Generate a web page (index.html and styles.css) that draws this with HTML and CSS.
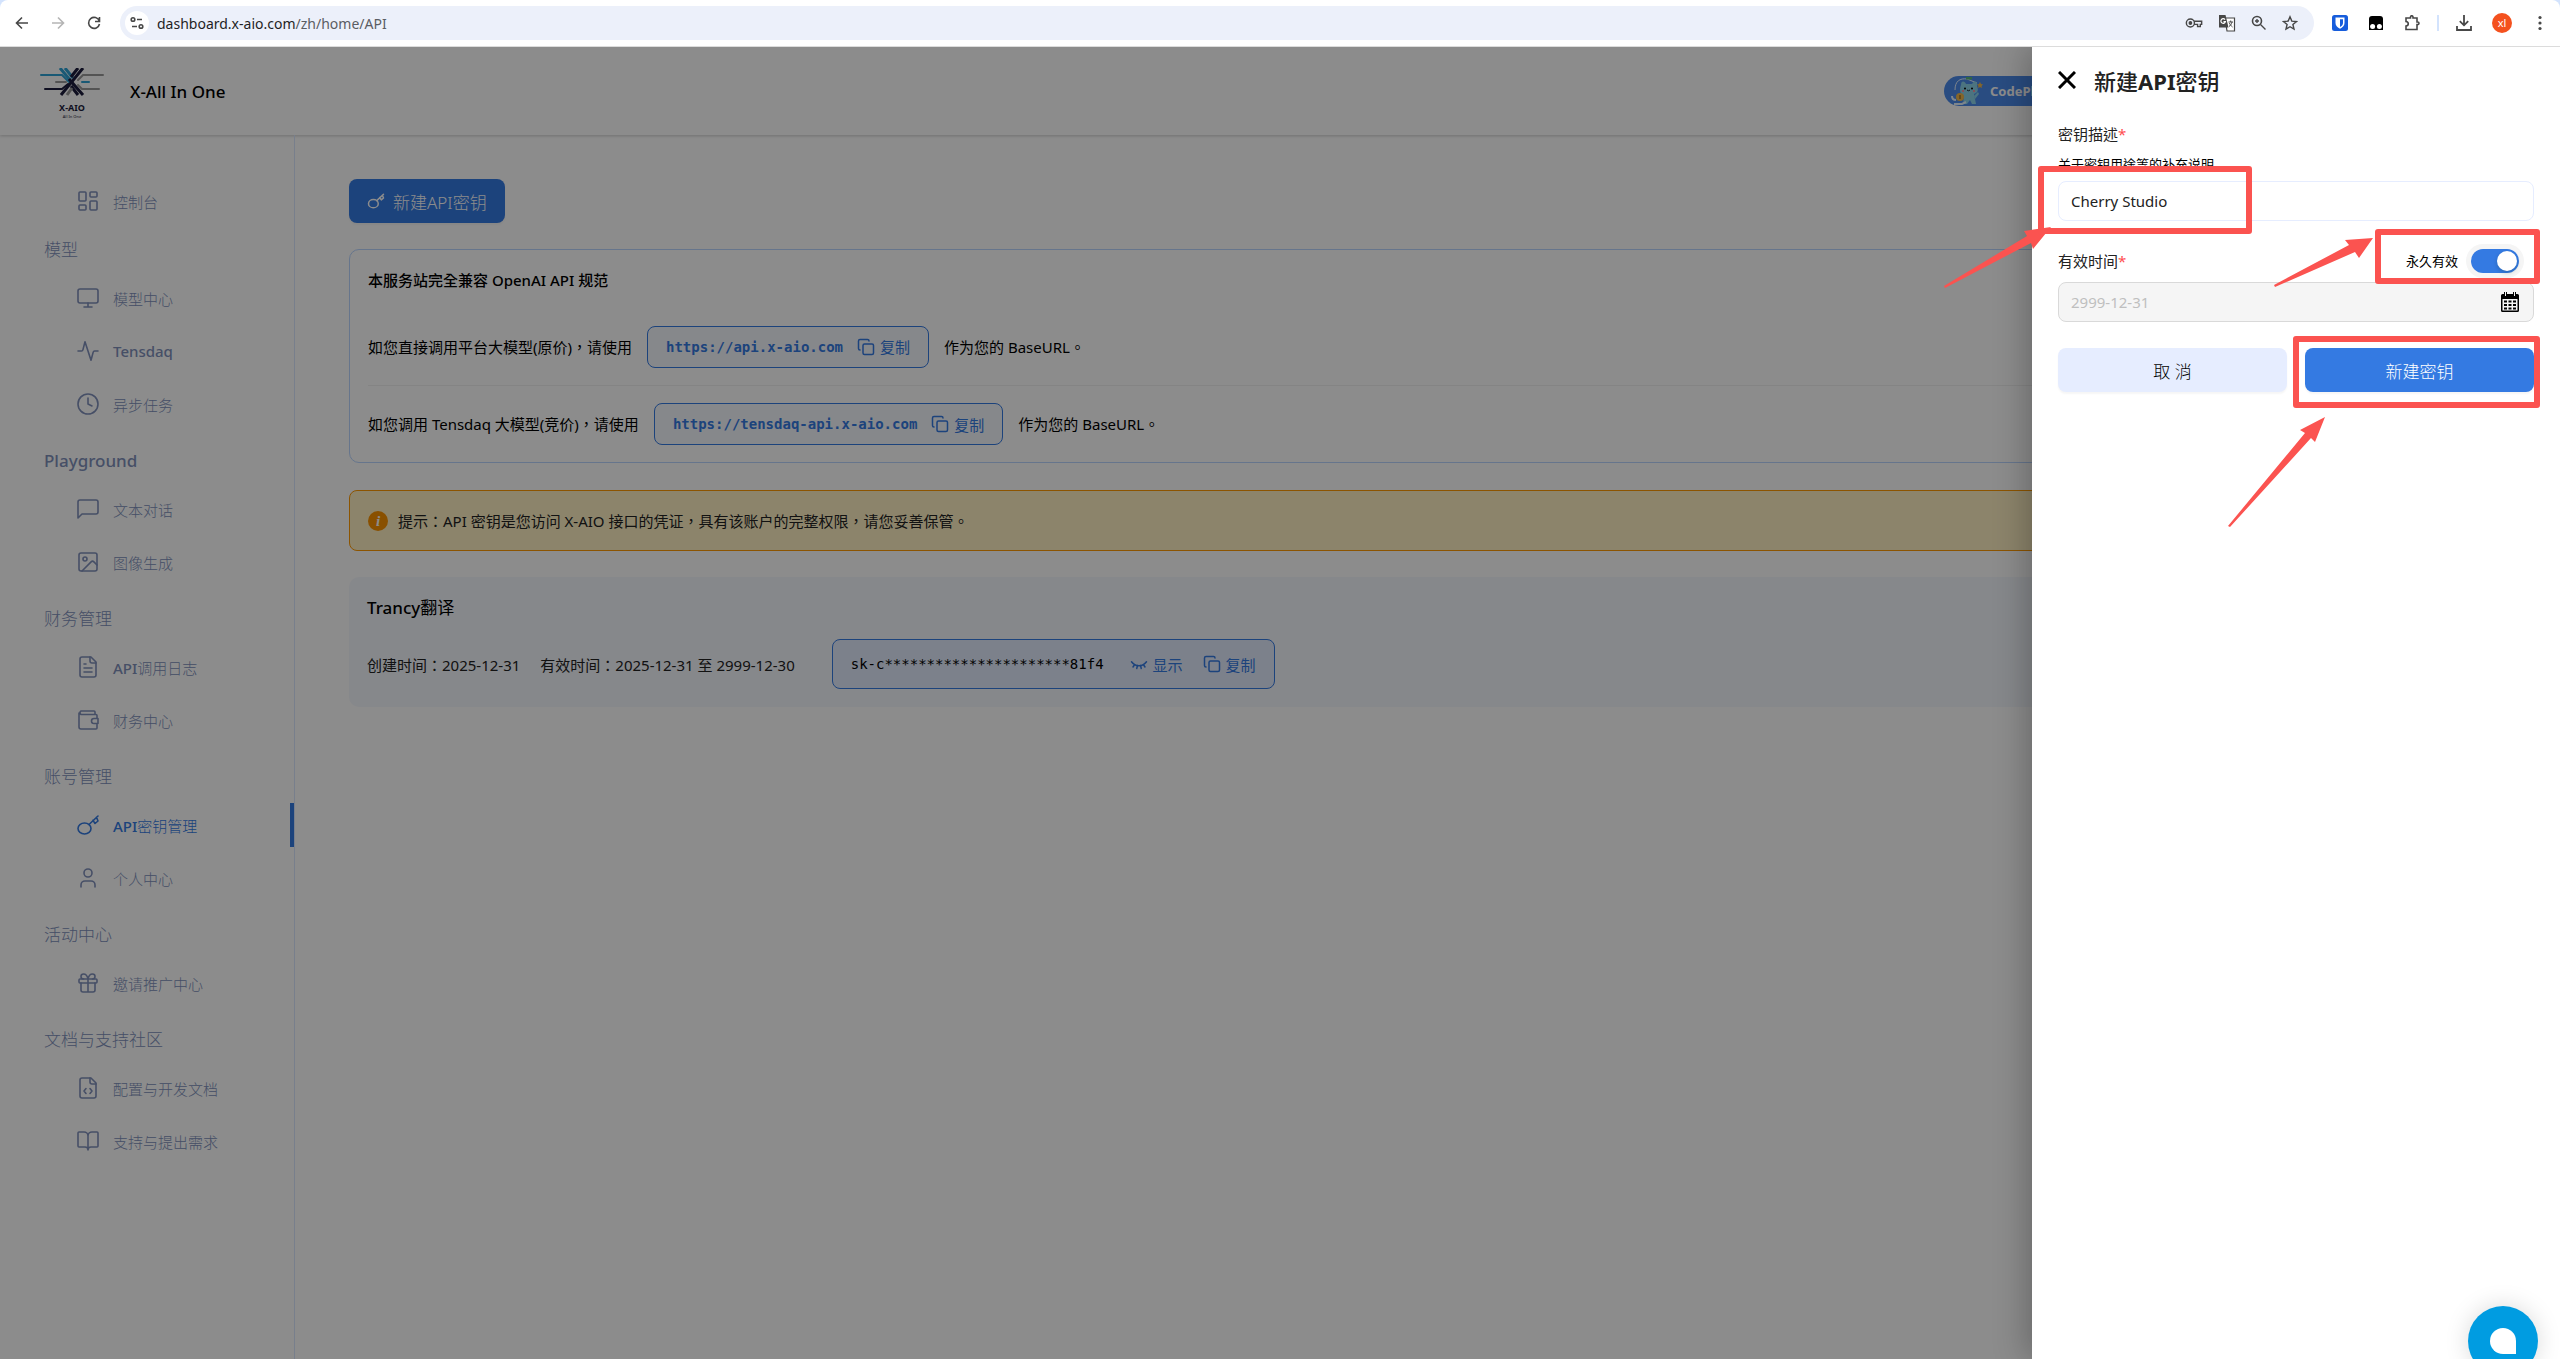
FILE: index.html
```html
<!DOCTYPE html>
<html lang="zh-TW">
<head>
    <meta charset="UTF-8">
    <meta name="viewport" content="width=device-width, initial-scale=1.0">
    <title>X-All In One</title>
    <link rel="stylesheet" href="styles.css">
</head>
<body>
    <!-- 图标 -->
    <svg class="sprite" aria-hidden="true">
        <symbol id="i-dashboard" viewBox="0 0 24 24"><rect x="3" y="3" width="7" height="9" rx="1"/><rect x="14" y="3" width="7" height="5" rx="1"/><rect x="14" y="12" width="7" height="9" rx="1"/><rect x="3" y="16" width="7" height="5" rx="1"/></symbol>
        <symbol id="i-monitor" viewBox="0 0 24 24"><rect x="2" y="3" width="20" height="14" rx="2"/><path d="M8 21h8M12 17v4"/></symbol>
        <symbol id="i-activity" viewBox="0 0 24 24"><path d="M2 12h3.500a1.500 1.500 0 0 0 1.400-1.100L9 2.700l6 18.600 2.200-8.200A1.500 1.500 0 0 1 18.600 12H22"/></symbol>
        <symbol id="i-clock" viewBox="0 0 24 24"><circle cx="12" cy="12" r="10"/><path d="M12 6v6l4 2"/></symbol>
        <symbol id="i-message" viewBox="0 0 24 24"><path d="M22 15a2 2 0 0 1-2 2H6l-4 4V5a2 2 0 0 1 2-2h16a2 2 0 0 1 2 2z"/></symbol>
        <symbol id="i-image" viewBox="0 0 24 24"><rect x="3" y="3" width="18" height="18" rx="2"/><circle cx="9" cy="9" r="2"/><path d="m21 15-3.100-3.100a2 2 0 0 0-2.800 0L6 21"/></symbol>
        <symbol id="i-file" viewBox="0 0 24 24"><path d="M15 2H6a2 2 0 0 0-2 2v16a2 2 0 0 0 2 2h12a2 2 0 0 0 2-2V7z"/><path d="M14 2v4a2 2 0 0 0 2 2h4M10 9H8M16 13H8M16 17H8"/></symbol>
        <symbol id="i-wallet" viewBox="0 0 24 24"><path d="M19 6V4a1 1 0 0 0-1-1H5a2 2 0 0 0 0 3.500h15a1 1 0 0 1 1 1V10M3 5v14a2 2 0 0 0 2 2h15a1 1 0 0 0 1-1v-3.500"/><path d="M22 10.500h-4a2.500 2.500 0 0 0 0 5h4z"/></symbol>
        <symbol id="i-key" viewBox="0 0 24 24"><ellipse cx="8.500" cy="15.500" rx="6.500" ry="5.500"/><path d="M13 11.500 22 3M20.500 4.300l1.500 3.700-3 2.500-2-3.200"/></symbol>
        <symbol id="i-user" viewBox="0 0 24 24"><circle cx="12" cy="7" r="4"/><path d="M19 21v-2a4 4 0 0 0-4-4H9a4 4 0 0 0-4 4v2"/></symbol>
        <symbol id="i-gift" viewBox="0 0 24 24"><rect x="3" y="8" width="18" height="4" rx="1"/><path d="M12 8v13M19 12v7a2 2 0 0 1-2 2H7a2 2 0 0 1-2-2v-7M7.500 8a2.500 2.500 0 0 1 0-5C11 3 12 8 12 8s1-5 4.500-5a2.500 2.500 0 0 1 0 5"/></symbol>
        <symbol id="i-code" viewBox="0 0 24 24"><path d="M15 2H6a2 2 0 0 0-2 2v16a2 2 0 0 0 2 2h12a2 2 0 0 0 2-2V7z"/><path d="M14 2v4a2 2 0 0 0 2 2h4M10 12.500 8 15l2 2.500M14 12.500l2 2.500-2 2.500"/></symbol>
        <symbol id="i-book" viewBox="0 0 24 24"><path d="M12 7v14M3 18a1 1 0 0 1-1-1V4a1 1 0 0 1 1-1h5a4 4 0 0 1 4 4 4 4 0 0 1 4-4h5a1 1 0 0 1 1 1v13a1 1 0 0 1-1 1h-6a3 3 0 0 0-3 3 3 3 0 0 0-3-3z"/></symbol>
        <symbol id="i-copy" viewBox="0 0 24 24"><rect x="8" y="8" width="14" height="14" rx="2"/><path d="M4 16a2 2 0 0 1-2-2V4a2 2 0 0 1 2-2h10a2 2 0 0 1 2 2"/></symbol>
        <symbol id="i-eye" viewBox="0 0 24 24"><path d="M2 9c5 7 15 7 20 0M4 16l2-3M20 16l-2-3M9 18l1-4M15 18l-1-4"/></symbol>
    </svg>

    <div class="browser">
        <div class="toolbar">
            <div class="nav-buttons">
                <button class="tool" aria-label="后退"><svg class="tool-icon" viewBox="0 0 16 16"><path d="M14 8H3M8 2.500 2.500 8 8 13.500"/></svg></button>
                <button class="tool off" aria-label="前进"><svg class="tool-icon" viewBox="0 0 16 16"><path d="M2 8h11M8 2.500 13.500 8 8 13.500"/></svg></button>
                <button class="tool" aria-label="刷新"><svg class="tool-icon" viewBox="0 0 16 16"><path d="M13.300 6A5.500 5.500 0 1 0 13.500 9M13.500 2v4.500H9"/></svg></button>
            </div>
            <div class="address">
                <span class="site-info"><svg class="tool-icon" viewBox="0 0 16 16"><circle cx="4" cy="4.500" r="1.800"/><path d="M8 4.500h5M3 11.500h5"/><circle cx="12" cy="11.500" r="1.800"/></svg></span>
                <span class="url">dashboard.x-aio.com<span class="path">/zh/home/API</span></span>
                <span class="address-icons">
                    <svg class="tool-icon wide" viewBox="0 0 20 16"><circle cx="6" cy="8" r="4.500"/><circle cx="6" cy="8" r="1.300" fill="#474747"/><path d="M10 6h8.500v3.500H17V12h-3V9.500h-4"/></svg>
                    <svg class="tool-icon wide" viewBox="0 0 18 18"><path d="M7 4h9.500v13H9z" fill="#fff" stroke-width="1.200"/><path d="M1 1h6.500l3 12.500H1z" fill="#474747" stroke="none"/><path d="M7 5.600a2.300 2.300 0 1 0 .4 2H5.500" stroke="#fff" stroke-width="1.200"/><path d="M10.500 8H15M12.700 6.500V8M14 8c-.4 2-1.500 3.500-3 4.500M11.500 9c.5 1.500 1.500 3 3 4" stroke-width="1"/></svg>
                    <svg class="tool-icon" viewBox="0 0 16 16"><circle cx="6" cy="6" r="4.500"/><path d="m9.500 9.500 5 5M6 4v4M4 6h4" stroke-width="1.400"/></svg>
                    <svg class="tool-icon" viewBox="0 0 16 16"><path d="m8 1.800 1.800 4.300 4.700.4-3.600 3 1.100 4.600L8 11.700 4 14.100l1.100-4.600-3.600-3 4.700-.4z" stroke-width="1.400"/></svg>
                </span>
            </div>
            <div class="extensions">
                <svg class="tool-icon" viewBox="0 0 16 16"><rect width="16" height="16" rx="2.500" fill="#175ddc" stroke="none"/><path d="M3.500 2.500h9V8c0 3-2.200 4.700-4.500 5.800C5.700 12.700 3.500 11 3.500 8z" fill="#fff" stroke="none"/><path d="M8 4.200h3V8c0 2-1.400 3.200-3 4z" fill="#175ddc" stroke="none"/></svg>
                <svg class="tool-icon" viewBox="0 0 16 16"><path d="M4 1h8c2 0 3 1 3 3v11H1V4c0-2 1-3 3-3z" fill="#000" stroke="none"/><circle cx="4.600" cy="11.500" r="2.500" fill="#fff" stroke="none"/><circle cx="11.400" cy="11.500" r="2.500" fill="#fff" stroke="none"/></svg>
                <svg class="tool-icon" viewBox="0 0 16 16"><path d="M2 3h4.500V2a1.200 1.200 0 0 1 2.500 0v1H13v4h.7a1.300 1.300 0 0 1 0 2.600H13V14.500H2V11c3-.3 3-4.200 0-4.500z"/></svg>
                <span class="divider"></span>
                <svg class="tool-icon" viewBox="0 0 16 16"><path d="M8 0v10M3.800 6.200 8 10.300l4.200-4.100M1 11v4h14v-4" stroke-width="1.800"/></svg>
                <span class="avatar">xl</span>
                <svg class="tool-icon" viewBox="0 0 16 16"><g fill="#474747" stroke="none"><circle cx="8" cy="2.500" r="1.600"/><circle cx="8" cy="8" r="1.600"/><circle cx="8" cy="13.500" r="1.600"/></g></svg>
            </div>
        </div>
    </div>

    <div class="viewport">
        <header class="header">
            <svg class="logo" viewBox="0 0 64 50" role="img" aria-label="X-AIO">
                <g fill="none" stroke-width="2">
                    <path d="M1 7h21l7 7M42 14h7" stroke="#2ea3d5" stroke-linecap="round"/>
                    <path d="M63 7H43l-5 5M16 14h10M59 21H42l-4-4" stroke="#9a9a9a" stroke-linecap="round"/>
                    <path d="M5 21h17l6-5" stroke="#1c1c3c" stroke-linecap="round"/>
                    <path d="m20 0 10 12M25 0l8 10" stroke="#2ea3d5" stroke-width="3"/>
                    <path d="M43 0 21 27M38 0l-7 9" stroke="#1c1c3c" stroke-width="3"/>
                    <path d="m29 11 14 16M31 18l7 9" stroke="#1c1c3c" stroke-width="3"/>
                    <path d="m32 20-5 7" stroke="#9a9a9a" stroke-width="3"/>
                </g>
                <text x="32" y="43" text-anchor="middle" class="logo-name">X-AIO</text>
                <text x="32" y="50" text-anchor="middle" class="logo-sub">All In One</text>
            </svg>
            <span class="brand">X-All In One</span>
            <a class="plan" href="#">
                <svg class="mascot" viewBox="0 0 34 30" aria-hidden="true">
                    <path d="M5 14C5 5 10 2 17 3l10 4" fill="none" stroke="#e4f2ff"/>
                    <path d="M16 1h6v2.500h-6z" fill="#5cb87a"/>
                    <path d="M11 9c0-5 4-4 5-1h6c2-4 6-3 5 2 2 5 0 7-3 8l1 5 1 5h-4l-2-4-3 4h-4l1-8c-4-2-5-6-3-11z" fill="#8ad3ea"/>
                    <path d="m24 20 4-4 1 2-4 5z" fill="#8ad3ea"/>
                    <circle cx="15" cy="12.500" r="1"/><circle cx="22" cy="12.500" r="1"/>
                    <path d="M12 15h2M23 15h2" stroke="#f08fa3" stroke-width="2"/>
                    <path d="M17 14q1.500 1.500 3 0" fill="none" stroke="#222"/>
                    <circle cx="10" cy="21" r="4" fill="#f0b84b"/><path d="M9 19h2v4H9z" fill="#b98531"/>
                    <path d="M2 20c0 3 2 4 4 4M4 28h8l4-2" stroke="#e4f2ff" fill="none" stroke-width="2"/>
                    <path d="m30 6 1 2 2 .5-1.500 1.500.5 2-2-1-2 1 .5-2L27 8.500l2-.5z" fill="#f0b84b"/>
                </svg>
                CodePlan
            </a>
        </header>

        <div class="layout">
            <nav class="sidebar">
                <a class="item" href="#"><svg class="icon"><use href="#i-dashboard"/></svg>控制台</a>
                <h2 class="group first">模型</h2>
                <a class="item" href="#"><svg class="icon"><use href="#i-monitor"/></svg>模型中心</a>
                <a class="item" href="#"><svg class="icon"><use href="#i-activity"/></svg><b>Tensdaq</b></a>
                <a class="item" href="#"><svg class="icon"><use href="#i-clock"/></svg>异步任务</a>
                <h2 class="group"><b>Playground</b></h2>
                <a class="item" href="#"><svg class="icon"><use href="#i-message"/></svg>文本对话</a>
                <a class="item" href="#"><svg class="icon"><use href="#i-image"/></svg>图像生成</a>
                <h2 class="group">财务管理</h2>
                <a class="item" href="#"><svg class="icon"><use href="#i-file"/></svg><span><b>API</b>调用日志</span></a>
                <a class="item" href="#"><svg class="icon"><use href="#i-wallet"/></svg>财务中心</a>
                <h2 class="group">账号管理</h2>
                <a class="item active" href="#"><svg class="icon"><use href="#i-key"/></svg><span><b>API</b>密钥管理</span></a>
                <a class="item" href="#"><svg class="icon"><use href="#i-user"/></svg>个人中心</a>
                <h2 class="group">活动中心</h2>
                <a class="item" href="#"><svg class="icon"><use href="#i-gift"/></svg>邀请推广中心</a>
                <h2 class="group">文档与支持社区</h2>
                <a class="item" href="#"><svg class="icon"><use href="#i-code"/></svg>配置与开发文档</a>
                <a class="item" href="#"><svg class="icon"><use href="#i-book"/></svg>支持与提出需求</a>
            </nav>

            <main class="content">
                <button class="btn primary new-key"><svg class="icon-sm"><use href="#i-key"/></svg>新建API密钥</button>

                <section class="card">
                    <h3 class="card-title">本服务站完全兼容 OpenAI API 规范</h3>
                    <div class="line">
                        <span>如您直接调用平台大模型(原价)，请使用</span>
                        <span class="pill"><code>https://api.x-aio.com</code><button class="link"><svg class="icon-copy"><use href="#i-copy"/></svg>复制</button></span>
                        <span>作为您的 BaseURL。</span>
                    </div>
                    <div class="line">
                        <span>如您调用 Tensdaq 大模型(竞价)，请使用</span>
                        <span class="pill"><code>https://tensdaq-api.x-aio.com</code><button class="link"><svg class="icon-copy"><use href="#i-copy"/></svg>复制</button></span>
                        <span>作为您的 BaseURL。</span>
                    </div>
                </section>

                <div class="notice">
                    <span class="info">i</span>
                    提示：API 密钥是您访问 X-AIO 接口的凭证，具有该账户的完整权限，请您妥善保管。
                </div>

                <section class="key">
                    <h3 class="key-name">Trancy<span>翻译</span></h3>
                    <div class="key-row">
                        <span>创建时间：2025-12-31</span>
                        <span>有效时间：2025-12-31 至 2999-12-30</span>
                        <span class="pill secret">
                            <code>sk-c**********************81f4</code>
                            <button class="link"><svg class="icon-copy"><use href="#i-eye"/></svg>显示</button>
                            <button class="link"><svg class="icon-copy"><use href="#i-copy"/></svg>复制</button>
                        </span>
                    </div>
                </section>
            </main>
        </div>

        <div class="mask"></div>

        <aside class="drawer">
            <div class="drawer-head">
                <button class="close" aria-label="关闭"><svg class="close-icon" viewBox="0 0 18 18"><path d="m1 1 16 16M17 1 1 17"/></svg></button>
                <h2 class="drawer-title">新建<b>API</b>密钥</h2>
            </div>
            <form class="form">
                <label class="label" for="desc">密钥描述<i>*</i></label>
                <p class="hint">关于密钥用途等的补充说明</p>
                <input class="input" type="text" id="desc" value="Cherry Studio">
                <div class="label-row">
                    <label class="label" for="expire">有效时间<i>*</i></label>
                    <label class="switch-label" for="forever">永久有效</label>
                    <input class="switch" type="checkbox" id="forever" checked>
                </div>
                <div class="date">
                    <input class="input" type="text" id="expire" value="2999-12-31" disabled>
                    <svg class="calendar" viewBox="0 0 18 20" aria-hidden="true"><path d="M1.500 2H3V0h3v2h6V0h3v2h1.500A1.500 1.500 0 0 1 18 3.500v15a1.500 1.500 0 0 1-1.500 1.500h-15A1.500 1.500 0 0 1 0 18.500v-15A1.500 1.500 0 0 1 1.500 2z"/><path d="M1.500 7h15v11.500h-15z" fill="#f5f5f5"/><path d="M3 8.500h3v2H3zm4.500 0h3v2h-3zm4.500 0h3v2h-3zM3 12h3v2H3zm4.500 0h3v2h-3zm4.500 0h3v2h-3zM3 15.500h3v2H3zm4.500 0h3v2h-3zm4.500 0h3v2h-3z"/><path d="M4 0h1v4H4zM13 0h1v4h-1z" fill="#f5f5f5"/></svg>
                </div>
                <div class="actions">
                    <button class="btn cancel" type="button">取 消</button>
                    <button class="btn primary" type="button">新建密钥</button>
                </div>
            </form>
        </aside>

        <button class="chat" aria-label="客服"><span class="chat-drop"></span></button>

        <!-- 标注 -->
        <svg class="marks" viewBox="0 0 620 500" aria-hidden="true">
            <g fill="none" stroke="#fb5350" stroke-width="6" stroke-linejoin="round">
                <rect x="101" y="122" width="208" height="62"/>
                <rect x="438" y="185" width="159" height="49"/>
                <rect x="356" y="292" width="241" height="66"/>
            </g>
            <g fill="#fb5350">
                <path d="M4 239 87 189 84 184 111 180 93 202 91 196 5 241z"/>
                <path d="M334 238 409 198 405 193 433 191 419 211 415 205 335 240z"/>
                <path d="M288 479 365 386 360 383 385 370 375 395 371 391 290 480z"/>
            </g>
        </svg>
    </div>
</body>
</html>
```
FILE: styles.css
```css
* {
    box-sizing: border-box;
}
body {
    margin: 0;
    height: 100vh;
    display: flex;
    flex-direction: column;
    overflow: hidden;
    font-family: "Noto Sans", "Noto Sans CJK TC", sans-serif;
    font-size: 15px;
    color: #000;
}
button, input {
    font-family: inherit;
    font-size: inherit;
}
button {
    border: none;
    padding: 0;
    background: none;
    color: inherit;
    cursor: pointer;
}
a {
    color: inherit;
    text-decoration: none;
}
h2, h3, p {
    margin: 0;
}
b {
    font-weight: 500;
}
.sprite {
    display: none;
}

/* 浏览器工具栏 */
.browser {
    background: #d3e3fd;
}
.toolbar {
    display: flex;
    align-items: center;
    height: 47px;
    padding: 0 12px 0 14px;
    background: #fff;
    border-bottom: 1px solid #dcdcdc;
    border-radius: 8px 8px 0 0;
}
.nav-buttons {
    display: flex;
    gap: 20px;
    width: 106px;
}
.tool {
    display: flex;
}
.tool.off {
    opacity: 0.4;
}
.tool-icon {
    width: 16px;
    height: 16px;
    fill: none;
    stroke: #474747;
    stroke-width: 1.6;
}
.tool-icon.wide {
    width: 18px;
    height: 18px;
}
.address {
    flex: 1;
    display: flex;
    align-items: center;
    height: 34px;
    padding: 0 16px 0 5px;
    background: #ecf0fa;
    border-radius: 17px;
}
.site-info {
    display: flex;
    align-items: center;
    justify-content: center;
    width: 24px;
    height: 24px;
    margin-right: 8px;
    border-radius: 50%;
    background: #fff;
}
.url {
    flex: 1;
    color: #1f1f1f;
    font-size: 14px;
}
.path {
    color: #5a5d63;
}
.address-icons {
    display: flex;
    align-items: center;
    gap: 15px;
}
.extensions {
    display: flex;
    align-items: center;
    gap: 20px;
    padding-left: 18px;
}
.divider {
    width: 2px;
    height: 16px;
    background: #d3e3fd;
    margin: 0 -3px;
}
.avatar {
    width: 20px;
    height: 20px;
    border-radius: 50%;
    background: #f4511e;
    color: #fff;
    font-size: 11px;
    line-height: 20px;
    text-align: center;
}

/* 页面 */
.viewport {
    position: relative;
    flex: 1;
    min-height: 0;
    display: flex;
    flex-direction: column;
    overflow: hidden;
    background: #fff;
}
.header {
    display: flex;
    align-items: center;
    height: 88px;
    padding-left: 40px;
    box-shadow: 0 1px 3px rgba(0, 0, 0, 0.2);
}
.logo {
    width: 64px;
    height: 50px;
    margin-top: 4px;
    margin-right: 26px;
}
.logo-name {
    font-size: 9px;
    font-weight: 700;
    fill: #1c1c3c;
}
.logo-sub {
    font-size: 4px;
    fill: #1c1c3c;
}
.brand {
    font-size: 17px;
    font-weight: 500;
}
.plan {
    display: flex;
    align-items: center;
    gap: 6px;
    width: 130px;
    height: 30px;
    margin-left: auto;
    margin-right: 486px;
    padding-left: 6px;
    border-radius: 15px;
    background: #4c8bec;
    color: #fff;
    font-size: 13px;
    font-weight: 700;
}
.mascot {
    width: 34px;
    height: 30px;
}
.layout {
    flex: 1;
    display: flex;
}
.sidebar {
    width: 295px;
    padding-top: 44px;
    border-right: 1px solid #dbe8ff;
    color: #8090bb;
}
.item {
    display: flex;
    align-items: center;
    gap: 13px;
    height: 44px;
    padding-left: 76px;
    font-weight: 300;
}
.item + .item {
    margin-top: 9px;
}
.item.active {
    color: #347ae2;
    border-right: 4px solid #347ae2;
}
.icon {
    width: 24px;
    height: 24px;
    fill: none;
    stroke: currentColor;
    stroke-width: 1.6;
    stroke-linecap: round;
    stroke-linejoin: round;
}
.group {
    margin: 22px 0 13px;
    padding-left: 44px;
    font-size: 17px;
    font-weight: 300;
    line-height: 26px;
}
.group.first {
    margin-top: 14px;
}
.content {
    flex: 1;
    padding: 44px 40px 0 54px;
}
.btn {
    height: 44px;
    border-radius: 8px;
    font-size: 17px;
    font-weight: 300;
    box-shadow: 0 2px 2px rgba(0, 0, 0, 0.04);
}
.primary {
    background: #347ae2;
    color: #fff;
}
.new-key {
    display: flex;
    align-items: center;
    gap: 8px;
    padding: 0 18px;
}
.icon-sm, .icon-copy {
    width: 18px;
    height: 18px;
    fill: none;
    stroke: currentColor;
    stroke-width: 2;
    stroke-linecap: round;
    stroke-linejoin: round;
}
.card {
    margin-top: 26px;
    padding: 18px;
    border: 1px solid #bad6ff;
    border-radius: 10px;
    line-height: 24px;
}
.card-title {
    margin-bottom: 16px;
    font-size: 15px;
    font-weight: 500;
}
.line {
    display: flex;
    align-items: center;
    gap: 15px;
    height: 77px;
}
.line + .line {
    border-top: 1px solid #f0f0f0;
}
.line:last-child {
    margin-bottom: -18px;
}
.pill {
    display: flex;
    align-items: center;
    gap: 14px;
    height: 42px;
    padding: 0 18px;
    border: 1px solid #347ae2;
    border-radius: 8px;
    background: #f5f7fd;
    color: #347ae2;
}
.pill code {
    font-family: "DejaVu Sans Mono", monospace;
    font-size: 14px;
    font-weight: 700;
}
.link {
    display: flex;
    align-items: center;
    gap: 5px;
}
.notice {
    display: flex;
    align-items: center;
    gap: 10px;
    height: 61px;
    margin-top: 27px;
    padding: 0 18px;
    border: 1px solid #ff9900;
    border-radius: 8px;
    background: #fff1c4;
    color: #222;
}
.info {
    width: 20px;
    height: 20px;
    border-radius: 50%;
    background: #fa9200;
    color: #fff;
    font: italic 700 15px/20px "Liberation Serif", serif;
    text-align: center;
}
.key {
    margin-top: 26px;
    padding: 18px;
    border-radius: 10px;
    background: #f5f7fd;
}
.key-name {
    margin-bottom: 18px;
    font-size: 17px;
    font-weight: 500;
    line-height: 26px;
}
.key-name span {
    font-weight: 400;
}
.key-row {
    display: flex;
    align-items: center;
    gap: 20px;
    color: #222;
}
.secret {
    gap: 20px;
    height: 50px;
    margin-left: 17px;
    background: #e2ebfd;
}
.secret code {
    margin-right: 6px;
    color: #000;
    font-weight: 400;
}

/* 抽屉 */
.mask {
    position: absolute;
    inset: 0;
    background: rgba(0, 0, 0, 0.45);
}
.drawer {
    position: absolute;
    top: 0;
    right: 0;
    bottom: 0;
    width: 528px;
    padding: 15px 26px;
    background: #fff;
    box-shadow: -6px 0 30px rgba(0, 0, 0, 0.25);
}
.drawer-head {
    display: flex;
    align-items: center;
    gap: 18px;
    height: 36px;
    margin-bottom: 24px;
}
.close {
    display: flex;
}
.close-icon {
    width: 18px;
    height: 18px;
    stroke: #000;
    stroke-width: 3;
}
.drawer-title {
    font-size: 22px;
    font-weight: 500;
    color: #222;
}
.drawer-title b {
    font-weight: 700;
}
.label {
    display: block;
    line-height: 24px;
    color: #222;
}
.label i {
    color: #ff4d4f;
    font-style: normal;
}
.hint {
    margin: 8px 0 7px;
    font-size: 13px;
    line-height: 20px;
}
.input {
    display: block;
    width: 100%;
    height: 40px;
    padding: 0 12px;
    border: 1px solid #e6edff;
    border-radius: 8px;
    color: #222;
}
.label-row {
    display: flex;
    align-items: center;
    height: 61px;
    padding: 18px 15px 0 0;
}
.switch-label {
    margin-left: auto;
    margin-right: 13px;
    font-size: 13px;
}
.switch {
    appearance: none;
    width: 48px;
    height: 24px;
    margin: 0;
    padding: 2px;
    border-radius: 12px;
    background: #347ae2;
    box-shadow: 0 0 0 5px #f5f5f5;
    cursor: pointer;
}
.switch::before {
    content: "";
    display: block;
    width: 20px;
    height: 20px;
    margin-left: auto;
    border-radius: 50%;
    background: #fff;
    box-shadow: 0 2px 4px rgba(0, 35, 11, 0.2);
}
.date {
    position: relative;
}
.date .input {
    border-color: #d9d9d9;
    background: #f5f5f5;
    color: #bfbfbf;
}
.calendar {
    position: absolute;
    right: 15px;
    top: 10px;
    width: 18px;
    height: 20px;
}
.actions {
    display: grid;
    grid-template-columns: 1fr 1fr;
    gap: 18px;
    margin-top: 26px;
}
.cancel {
    background: #e6edff;
    color: #000;
}
.chat {
    position: absolute;
    right: 22px;
    bottom: -17px;
    display: flex;
    align-items: center;
    justify-content: center;
    width: 70px;
    height: 70px;
    border-radius: 50%;
    background: #009ce1;
    box-shadow: 0 0 24px rgba(0, 0, 0, 0.15);
}
.chat-drop {
    width: 26px;
    height: 26px;
    border-radius: 50% 50% 0 50%;
    background: #fff;
}
.marks {
    position: absolute;
    top: 0;
    right: 0;
    width: 620px;
    height: 500px;
    pointer-events: none;
}
```
